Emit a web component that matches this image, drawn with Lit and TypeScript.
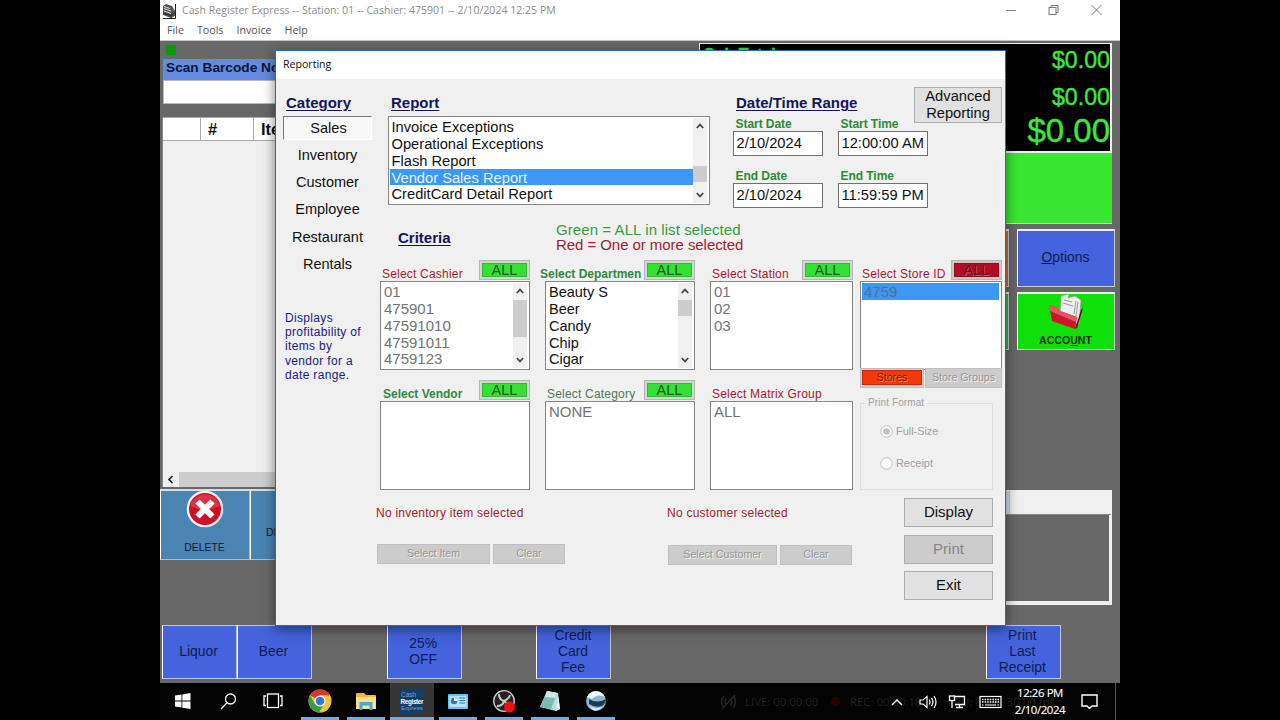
import { LitElement, html, css, svg, nothing } from "lit";
import { customElement, property } from "lit/decorators.js";
import { classMap } from "lit/directives/class-map.js";

const base = css`
  * { box-sizing: border-box; }
  :host { font-family: "Liberation Sans", Arial, sans-serif; color: #111; }
  svg { display: block; flex: none; }
`;

@customElement("list-box")
class ListBox extends LitElement {
  @property({ attribute: false }) items: string[] = [];
  @property({ type: Number }) selected = -1;
  @property({ type: Boolean }) dim = false;
  @property({ type: Boolean }) wide = false;
  @property({ attribute: false }) thumb: [number, number] | null = null;
  static styles = [base, css`
    :host { display: block; height: 89px; }
    .box { height: 100%; display: flex; background: #fff; border: 1px solid #868686; padding: 1px 2px 0 1px; }
    .rows { flex: 1; overflow: hidden; white-space: nowrap; }
    .row { height: 16.850px; line-height: 18px; font-size: 14.5px; padding-left: 2px; }
    .dim .row { color: #737373; font-size: 15px; }
    .row.sel { background: #3c98f4; color: #e4f3ff; }
    .dim .row.sel { color: #4f7396; }
    .wide .row { font-size: 14.7px; padding-left: 1.500px; }
    .bar { width: 14px; margin-bottom: 1px; background: #f0f0f0; display: flex; flex-direction: column; justify-content: space-between; position: relative; }
    .bar svg { margin: 5px auto; }
    .thumb { position: absolute; left: 0; width: 14px; background: #cdcdcd; }
  `];
  render() {
    const arrow = (d: string) => html`<svg width="8" height="6" viewBox="0 0 8 6"><path d=${d} fill="none" stroke="#444" stroke-width="1.7"/></svg>`;
    return html`<div class=${classMap({ box: true, dim: this.dim, wide: this.wide })}>
      <div class="rows">${this.items.map((t, i) => html`<div class=${classMap({ row: true, sel: i === this.selected })}>${t}</div>`)}</div>
      ${this.thumb ? html`<div class="bar">${arrow("M.8 5 4 1.6 7.2 5")}
        <div class="thumb" style="top:${this.thumb[0]}px;height:${this.thumb[1]}px"></div>
        ${arrow("M.8 1 4 4.4 7.2 1")}</div>` : nothing}
    </div>`;
  }
}

interface Crit { label: string; cls: string; items: string[]; dim?: boolean; thumb?: [number, number]; all?: string; selected?: number; }

@customElement("report-dialog")
class ReportDialog extends LitElement {
  static styles = [base, css`
    :host { display: flex; flex-direction: column; background: #f0f0f0; border: 1px solid #2b6ca8; box-shadow: 0 3px 12px rgba(0,0,0,.5); }
    .title { height: 28px; background: #fff; padding-left: 7px; font: 10.6px/27px "Open Sans", sans-serif; color: #111; }
    .body { flex: 1; display: flex; min-height: 0; }
    .head { font-weight: bold; font-size: 15px; line-height: 18px; text-decoration: underline; text-underline-offset: 2px; color: #14145f; white-space: nowrap; }
    .side { width: 100px; flex: none; padding-top: 15px; }
    .side .head { padding-left: 10px; }
    .cat { width: 89px; margin-left: 7px; height: 27.2px; line-height: 27.2px; text-align: center; font-size: 14.5px; }
    .cat.on { height: 24px; line-height: 23px; margin-top: 4px; margin-bottom: 2px; padding-left: 2px; background: #f8f8f8; border: 1px solid #777; border-right-color: #fff; border-bottom-color: #fff; }
    .desc { margin: 33px 0 0 9px; font-size: 12px; line-height: 14.2px; letter-spacing: .33px; color: #1c1c80; white-space: pre; }
    .main { flex: 1; min-width: 0; }
    .top { height: 136px; display: flex; padding-left: 12px; }
    .report { width: 322px; flex: none; padding-top: 15px; }
    .report .head { padding-left: 3px; }
    .report list-box { margin-top: 4px; }
    .dates { width: 196px; flex: none; margin-left: 23px; padding-top: 15px; }
    .dates .head { padding-left: 3px; }
    .grid { display: grid; grid-template-columns: 90px 90px; column-gap: 15px; row-gap: 13px; margin-top: 5px; }
    .lab { font-weight: bold; font-size: 12px; line-height: 14px; height: 14px; padding-left: 2.500px; color: #2d8a35; letter-spacing: -.05px; }
    .field { height: 25px; border: 1px solid #707070; background: #fff; font-size: 14.7px; line-height: 23px; padding-left: 2.500px; white-space: nowrap; }
    .btn { display: flex; align-items: center; justify-content: center; text-align: center; background: #e1e1e1; border: 1px solid #adadad; font-size: 15px; flex: none; white-space: nowrap; }
    .adv { width: 88px; height: 36px; margin: 8px 0 0 -15px; font-size: 14.7px; line-height: 17px; }
    .mid { height: 45px; display: flex; padding-left: 22px; }
    .mid .head { width: 158px; padding-top: 14px; }
    .key { padding-top: 7px; font-size: 15px; line-height: 15px; color: #3b9a40; letter-spacing: .08px; }
    .key .red { letter-spacing: -.06px; }
    .red { color: #a01c30; }
    .crits { display: grid; grid-template-columns: 150px 150px 143px 134px; column-gap: 15px; padding-left: 4px; }
    .last { margin-left: -8px; }
    .ch { height: 21px; display: flex; justify-content: space-between; }
    .cl { flex: 1; min-width: 0; overflow: hidden; white-space: nowrap; font-size: 12px; letter-spacing: .2px; line-height: 14px; padding: 7px 0 0 2px; }
    .cl.bold { font-weight: bold; color: #338743; letter-spacing: 0; padding-left: 3px; }
    .cl.bold.shift { margin-left: -5px; margin-right: 3px; padding-left: 0; font-size: 12px; }
    .cl.olive { color: #53775a; }
    .all { width: 51px; height: 20px; border: 1px solid #b5b5b5; background: #c9ddc9; padding: 2px; }
    .all i { display: block; height: 100%; font-style: normal; background: #35e035; color: #205a20; font-size: 14.5px; text-align: center; border: 1px solid #31bb36; line-height: 13px; }
    .all.r { background: #d4c5c5; }
    .all.r i { background: #b30d27; border-color: #8c1025; color: #69101c; text-shadow: 1px 1px #d05365; }
    .second { margin-top: 10px; }
    .stores { height: 20px; display: flex; margin-top: -2px; position: relative; }
    .st { width: 64px; background: #d4cdcb; border: 1px solid #c4bcba; padding: 1px 1px 2px; font-size: 10.7px; text-align: center; color: #7b1c08; text-shadow: 1px 1px #f88050; }
    .st i { display: block; height: 100%; font-style: normal; background: #f03a0a; border: 1px solid #c82b08; line-height: 13px; }
    .off { background: #cccccc; border: 1px solid #bfbfbf; color: #969696; text-shadow: 1px 1px #f2f2f2; font-size: 10.6px; padding-bottom: 2px; }
    .grp { flex: 1; margin-left: 1px; }
    .fmt { display: flow-root; height: 87px; width: 133px; margin-top: 15px; border: 1px solid #dedede; border-top: 0; color: #a0a0a0; font-size: 10.9px; }
    .fmt .leg { display: flex; align-items: center; font-size: 10px; line-height: 12px; margin-top: -6px; gap: 3px; height: 12px; letter-spacing: .1px; }
    .fmt .leg::before { content: ""; width: 4px; height: 1px; background: #dedede; }
    .fmt .leg::after { content: ""; flex: 1; height: 1px; background: #dedede; }
    .opt { display: flex; align-items: center; gap: 3px; height: 32px; padding-left: 19px; }
    .leg + .opt { margin-top: 6px; }
    .foot { display: flex; height: 134px; }
    .msg { font-size: 12px; letter-spacing: .24px; line-height: 14px; color: #a01c30; padding-top: 16px; height: 54px; white-space: nowrap; }
    .g1 { width: 291px; flex: none; }
    .g2 { width: 238px; flex: none; }
    .pair { display: flex; gap: 3px; }
    .g1 .pair { padding-left: 1px; }
    .g2 .pair { padding: 1px 0 0 1px; }
    .pair .btn { height: 20px; }
    .w113 { width: 113px; } .w72 { width: 72px; } .w109 { width: 109px; }
    .acts { width: 89px; flex: none; display: flex; flex-direction: column; gap: 7.500px; padding-top: 8px; margin-left: -1px; }
    .acts .btn { height: 29px; font-size: 15px; padding-bottom: 2px; }
    .acts .gray { background: #ccc; color: #858585; }
  `];
  crit(c: Crit, last = false) {
    return html`<div class=${last ? "last" : ""}>
      <div class="ch"><div class="cl ${c.cls}">${c.label}</div>
      ${c.all ? html`<div class="all ${c.all}"><i>ALL</i></div>` : nothing}</div>
      <list-box .items=${c.items} ?dim=${c.dim} .thumb=${c.thumb ?? null} .selected=${c.selected ?? -1}></list-box></div>`;
  }
  render() {
    const radio = (on: boolean) => html`<svg width="13" height="13" viewBox="0 0 13 13"><circle cx="6.5" cy="6.5" r="5.7" fill="#fdfdfd" stroke="#bdbdbd"/>${on ? svg`<circle cx="6.5" cy="6.5" r="3.3" fill="#c2c2c2"/>` : nothing}</svg>`;
    return html`
      <div class="title">Reporting</div>
      <div class="body">
        <div class="side">
          <div class="head">Category</div>
          <div class="cat on">Sales</div>
          ${["Inventory", "Customer", "Employee", "Restaurant", "Rentals"].map((t) => html`<div class="cat">${t}</div>`)}
          <div class="desc">${["Displays", "profitability of", "items by", "vendor for a", "date range."].join("\n")}</div>
        </div>
        <div class="main">
          <div class="top">
            <div class="report"><div class="head">Report</div>
              <list-box wide .items=${["Invoice Exceptions", "Operational Exceptions", "Flash Report", "Vendor Sales Report", "CreditCard Detail Report"]} .selected=${3} .thumb=${[48, 16]}></list-box></div>
            <div class="dates"><div class="head">Date/Time Range</div>
              <div class="grid">
                <div><div class="lab">Start Date</div><div class="field">2/10/2024</div></div>
                <div><div class="lab">Start Time</div><div class="field">12:00:00 AM</div></div>
                <div><div class="lab">End Date</div><div class="field">2/10/2024</div></div>
                <div><div class="lab">End Time</div><div class="field">11:59:59 PM</div></div>
              </div></div>
            <div class="btn adv">Advanced<br>Reporting</div>
          </div>
          <div class="mid"><div class="head">Criteria</div>
            <div class="key">Green = ALL in list selected<div class="red">Red = One or more selected</div></div></div>
          <div class="crits">
            ${this.crit({ label: "Select Cashier", cls: "red", items: ["01", "475901", "47591010", "47591011", "4759123"], dim: true, thumb: [17, 37], all: "g" })}
            ${this.crit({ label: "Select Departmen", cls: "bold shift", items: ["Beauty S", "Beer", "Candy", "Chip", "Cigar"], thumb: [17, 16], all: "g" })}
            ${this.crit({ label: "Select Station", cls: "red", items: ["01", "02", "03"], dim: true, all: "g" })}
            ${this.crit({ label: "Select Store ID", cls: "red", items: ["4759"], dim: true, selected: 0, all: "r" }, true)}
            <div class="second">${this.crit({ label: "Select Vendor", cls: "bold", items: [], all: "g" })}</div>
            <div class="second">${this.crit({ label: "Select Category", cls: "olive", items: ["NONE"], dim: true, all: "g" })}</div>
            <div class="second">${this.crit({ label: "Select Matrix Group", cls: "red", items: ["ALL"], dim: true })}</div>
            <div class="last">
              <div class="stores"><div class="st"><i>Stores</i></div><div class="btn off grp">Store Groups</div></div>
              <div class="fmt"><div class="leg">Print Format</div>
                <div class="opt">${radio(true)}Full-Size</div><div class="opt">${radio(false)}Receipt</div></div>
            </div>
          </div>
          <div class="foot">
            <div class="g1"><div class="msg">No inventory item selected</div>
              <div class="pair"><div class="btn off w113">Select Item</div><div class="btn off w72">Clear</div></div></div>
            <div class="g2"><div class="msg">No customer selected</div>
              <div class="pair"><div class="btn off w109">Select Customer</div><div class="btn off w72">Clear</div></div></div>
            <div class="acts"><div class="btn">Display</div><div class="btn gray">Print</div><div class="btn">Exit</div></div>
          </div>
        </div>
      </div>`;
  }
}

@customElement("task-bar")
class TaskBar extends LitElement {
  static styles = [base, css`
    :host { display: flex; position: relative; height: 37px; background: #030303; color: #fff; font-family: "Open Sans", sans-serif; }
    .slot { width: 46px; display: flex; align-items: center; justify-content: center; border-bottom: 3px solid transparent; padding-top: 2px; }
    .s1 { width: 45px; } .s3 { width: 43px; margin-right: 3px; }
    .slot.run { width: 38px; margin: 0 4px; border-bottom-color: #76a9d8; }
    .slot.active { width: 44px; margin: 0 1px; background: #353535; }
    .tray { margin-left: auto; display: flex; align-items: center; position: relative; }
    .clock { width: 58px; margin: 0 0 2px 9px; text-align: center; font-size: 11.4px; line-height: 17px; letter-spacing: -.4px; white-space: nowrap; -webkit-text-stroke: .15px #fff; }
    .ghost { position: absolute; left: 560px; top: 0; height: 37px; display: flex; align-items: center; color: #212121; font-size: 11.400px; white-space: nowrap; }
    .ghost .live { margin-left: 8px; width: 86px; }
    .ghost .dot { width: 9px; height: 9px; border-radius: 5px; background: #2a0206; margin-right: 10px; }
    .ghost .rec { width: 97px; }
    .edge { width: 1px; height: 37px; background: #555; margin: 0 4px 0 16px; }
  `];
  render() {
    return html`
      <div class="ghost">
        <svg width="17" height="16" viewBox="0 0 17 16" fill="none" stroke="#252525" stroke-width="1.5"><path d="M4 2Q-1 8 4 14M6.5 4.5Q4 8 6.5 11.5M13 2Q18 8 13 14M10.500 4.500Q13 8 10.500 11.500M15 1 2 15"/></svg>
        <span class="live">LIVE: 00:00:00</span><span class="dot"></span><span class="rec">REC: 00:00:18</span><span>CPU: 8.4%, 30.00 fps</span>
      </div>
      <div class="slot s1"><svg width="16" height="16" viewBox="0 0 16 16" fill="#fff"><path d="M0 2.400 6.500 1.500V7.600H0zM7.300 1.400 15.500 0V7.600H7.300zM0 8.400H6.500V14.500L0 13.600zM7.300 8.400H15.500V16L7.300 14.700z"/></svg></div>
      <div class="slot"><svg width="17" height="17" viewBox="0 0 17 17" fill="none" stroke="#fff" stroke-width="1.300"><circle cx="10.500" cy="6" r="5"/><path d="M7 9.700 1 16"/></svg></div>
      <div class="slot s3"><svg width="20" height="16" viewBox="0 0 20 16" fill="none" stroke="#fff" stroke-width="1.300"><rect x="4.500" y="1" width="11" height="13.500"/><path d="M3 3H1v9.500H3M17 3h2v9.500H17"/></svg></div>
      <div class="slot run"><svg width="24" height="24" viewBox="0 0 24 24"><circle cx="12" cy="12" r="11.500" fill="#f3c52c"/><path d="M12 12 2 6.300A11.500 11.500 0 0 1 22 6.300H12z" fill="#d8382c"/><path d="M12 12 7 15 2 6.300A11.500 11.500 0 0 0 11 23.500L16.500 14.500z" fill="#3c9b45"/><circle cx="12" cy="12" r="5.600" fill="#fff"/><circle cx="12" cy="12" r="4.300" fill="#2f7ad8"/></svg></div>
      <div class="slot run"><svg width="21" height="19" viewBox="0 0 21 19"><path d="M0 2Q0 1 1 1H8L10 3H19Q20 3 20 4V17H0z" fill="#e5b94a"/><path d="M0 5H20V17H0z" fill="#fae08c"/><path d="M3.500 18V10H16.500V18H13.500V13.500H6.500V18z" fill="#44a9d8"/></svg></div>
      <div class="slot run active"><svg width="24" height="24" viewBox="0 0 24 24"><rect width="24" height="24" fill="#123f69"/><g font-family="Liberation Sans" fill="#7fa5c5" font-size="6.500"><text x="1" y="7.500">Cash</text><text x="0.500" y="14.500" fill="#fff" font-weight="bold" font-size="6.300" textLength="23">Register</text><text x="1" y="20.500" font-size="6">Express</text></g></svg></div>
      <div class="slot run"><svg width="20" height="15" viewBox="0 0 20 15"><rect width="20" height="15" rx="1" fill="#68c4f0"/><rect x="1.500" y="2" width="17" height="11" fill="#b3e5fa"/><circle cx="6" cy="7" r="3.200" fill="#2c78b7"/><path d="M6 7V3.800A3.200 3.200 0 0 1 9.200 7z" fill="#fff"/><path d="M11.500 4H17M11.500 6.500H17M11.500 9H17" stroke="#267ab5" stroke-width="1.200"/></svg></div>
      <div class="slot run"><svg width="24" height="24" viewBox="0 0 24 24"><circle cx="12" cy="12" r="10.300" fill="#222" stroke="#d0d0d0" stroke-width="1.300"/><g fill="none" stroke="#c9c9c9" stroke-width="2"><path d="M7 5Q7 11 12 12Q17 10 18 6M12 12Q11 17 5 17M12 12Q17 15 15 20"/></g><circle cx="17.500" cy="18" r="5.500" fill="#f50c0c"/></svg></div>
      <div class="slot run"><svg width="23" height="22" viewBox="0 0 23 22"><path d="M8 1 19 3 21 19 17 21 1 17z" fill="#b9ddda"/><path d="M8 1 18 3 12 19 1 17z" fill="#79b9b6"/><path d="M8 1 18 3 16 8 6 7z" fill="#cce9e5"/><path d="M17 21 21 19 19 5z" fill="#edf7f5"/></svg></div>
      <div class="slot run"><svg width="22" height="22" viewBox="0 0 22 22"><circle cx="11" cy="11" r="10" fill="#8db6cc"/><path d="M2 7A10 10 0 0 1 20 7Q13 3 7 9z" fill="#edf6fa"/><path d="M4 9Q12 14 21 9 21 13 17 16 10 18 4 14z" fill="#173b5b"/><path d="M3 15Q9 20 17 17 13 22 8 20z" fill="#dfe9ee"/></svg></div>
      <div class="tray">
        <svg width="12" height="8" viewBox="0 0 12 8" fill="none" stroke="#fff" stroke-width="1.500"><path d="M1 7 6 2 11 7"/></svg>
        <svg width="35" height="16" viewBox="0 0 35 16" fill="none" stroke="#fff" stroke-width="1.200"><path d="M17 6h3l4-3.500v11L20 10H17zM26 5.500Q28 8 26 10.500M28.500 3.800Q31.500 8 28.500 12.200M31 2Q35 8 31 14"/></svg>
        <svg width="34" height="16" viewBox="4 0 34 16" fill="none" stroke="#fff" stroke-width="1.300"><path d="M19.500 2.500H30.500V10.500H21M22 13.500H29M25.500 10.500V13.500"/><rect x="15.500" y="2" width="5" height="4.500" fill="#030303"/><path d="M18 6.500V14"/></svg>
        <svg width="30" height="14" viewBox="0 0 30 14" fill="none" stroke="#fff" stroke-width="1.200"><rect x="8" y="1.500" width="21" height="11"/><path d="M10 4.500H27M10 7H27" stroke-dasharray="1.500 1.100" stroke-width="1.500"/><path d="M10 10h1.500M13 10H24M25.500 10H27"/></svg>
        <div class="clock">12:26 PM<br>2/10/2024</div>
        <svg width="30" height="17" viewBox="0 0 30 17" fill="none" stroke="#fff" stroke-width="1.400"><path d="M13 2H28V13H23L20.500 15.500 18 13H13z"/></svg>
        <div class="edge"></div>
      </div>`;
  }
}

@customElement("app-root")
class AppRoot extends LitElement {
  static styles = [base, css`
    :host { display: block; width: 1280px; height: 720px; background: #000; padding: 0 160px; overflow: hidden; box-sizing: border-box; }
    .screen { position: relative; width: 960px; height: 720px; display: flex; flex-direction: column; background: #686868; }
    .title { height: 21px; background: #fff; display: flex; align-items: center; padding: 0 18px 0 2px; font: 10.570px/21px "Open Sans", sans-serif; color: #8c8c8c; }
    .title span { padding-left: 6px; white-space: pre; }
    .ctl { margin-left: auto; display: flex; gap: 32px; align-items: center; margin-bottom: 2px; }
    .menu { height: 20px; background: #fff; border-bottom: 1px solid #c8c8c8; display: flex; gap: 13px; padding-left: 7px; font: 10.700px/19px "Open Sans", sans-serif; color: #555; }
    .work { height: 448px; display: flex; justify-content: space-between; padding: 2px 6px 0 2px; }
    .left { width: 240px; padding-top: 2px; }
    .led { width: 10px; height: 10px; background: #0c970c; margin-left: 4px; }
    .scan { height: 21px; margin: 4px 0 0 1px; background: #648be0; padding-left: 3px; font: bold 13.700px/17px "Liberation Sans"; color: #0b1538; white-space: nowrap; }
    .entry { height: 24px; margin-left: 1px; background: #fff; border: 1px solid #bbb; }
    .tbl { margin-top: 13px; height: 370px; background: #f0f0f0; display: flex; flex-direction: column; border-left: 1px solid #888; }
    .th { height: 24px; display: flex; background: #fff; border: 1px solid #aaa; border-left: 0; font: bold 16.400px/23px "Liberation Sans"; }
    .th div { border-right: 1px solid #aaa; padding-left: 7px; }
    .c1 { width: 38px; } .c2 { width: 53px; }
    .hs { margin-top: auto; height: 15px; display: flex; background: #cdcdcd; }
    .hs div { width: 16px; background: #f0f0f0; padding: 3px 4px; }
    .right { width: 415px; padding-right: 2px; }
    .tot { height: 110px; background: #000; border: 1px solid #ccc; border-width: 1px 2px 2px 1px; border-color: #eee; color: #3de83d; display: grid; grid-template-columns: 1fr auto; align-content: start; font-size: 23.200px; -webkit-text-stroke: .4px #3de83d; }
    .amts { text-align: right; }
    .amts .big { font-size: 33px; line-height: 28px; }
    .amts .a1 { line-height: 33px; } .amts .a2 { line-height: 40px; }
    .sub { font-weight: bold; font-size: 16px; padding: 0 0 0 4px; line-height: 22px; }
    .pay { height: 71px; background: #3be632; border-bottom: 1px solid #bdf0b8; }
    .acts { display: grid; grid-template-columns: 97px 98px; gap: 5px 8px; justify-content: end; margin: 5px -3px 0 0; }
    .tile { height: 58px; border: 1px solid #ccc; border-left-color: #fff; border-top: 2px solid #eee; display: flex; flex-direction: column; align-items: center; justify-content: center; text-align: center; font-size: 13.900px; color: #0f1c50; background: #4463dc; padding: 0 1px 3px 0; }
    .orange { background: #c4694c; } .teal { background: #2eb557; }
    .acct { background: #10e009; font-size: 10.600px; font-weight: bold; color: #062c06; justify-content: flex-start; }
    .acct span { margin-top: 2px; }
    .lower { height: 136px; display: flex; justify-content: space-between; padding: 0 8px 0 0; }
    .tools { display: flex; }
    .tool { width: 90px; height: 71px; background: #4a84b3; border: 1px solid #bbb; border-left-color: #fff; border-top: 2px solid #ddd; font-size: 10.400px; color: #101c33; display: flex; flex-direction: column; align-items: center; }
    .tool.one { padding-right: 1px; }
    .tool.one svg { margin-top: -1px; }
    .tool.one span { margin-top: 14px; }
    .tool.two { padding: 36px 0 0 15px; align-items: flex-start; }
    .tabs { width: 240px; height: 115px; margin-top: 1px; background: #686868; border: 2px solid #f0f0f0; border-width: 1px 3px 4px; }
    .tabs div { height: 24px; background: #f0f0f0; border-bottom: 1px solid #888; margin-right: -2px; display: flex; }
    .tabs i { width: 135px; background: #cfe3ea; border-right: 1px solid #b5d3de; }
    .quick { height: 58px; padding: 0 0 0 2px; display: grid; grid-template-columns: repeat(12, 74.900px); }
    .q { height: 54px; width: 75px; padding: 0 2px 2px 0; font-size: 13.900px; line-height: 16.200px; border: 1px solid #bbc5ea; border-left-color: #fff; background: #4463dc; color: #0f1c50; display: flex; align-items: center; justify-content: center; text-align: center; white-space: pre-line; }
    report-dialog { position: absolute; left: 115px; top: 50px; width: 731px; height: 576px; }
  `];
  render() {
    const quick = ["Liquor", "Beer", "", "25%\nOFF", "", "Credit\nCard\nFee", "", "", "", "", "", "Print\nLast\nReceipt"];
    return html`<div class="screen">
      <div class="title">
        <svg width="14" height="16" viewBox="0 0 14 16"><path d="M1 3 4 1 10 3 13 8V13L9 15 1 12z" fill="#555"/><path d="M2 3.500 8 5.500M2 5.500 9 8M2 8 9 10.500" stroke="#ddd"/><path d="M1 10 9 12.500 13 10M9 15V12.500M1 15.500H13.500V1" stroke="#222" fill="none"/></svg>
        <span>Cash Register Express -- Station: 01 -- Cashier: 475901 -- 2/10/2024 12:25 PM</span>
        <div class="ctl">
          <svg width="10" height="10" viewBox="0 0 10 10"><path d="M0 5.500H10" stroke="#888"/></svg>
          <svg width="11" height="10" viewBox="0 0 11 10" fill="none" stroke="#777"><rect x="1" y="2.500" width="7" height="7"/><path d="M3 2.500V.5H10V7.500H8"/></svg>
          <svg width="11" height="10" viewBox="0 0 11 10"><path d="M.5 0 10.500 10M10.500 0 .5 10" stroke="#777"/></svg>
        </div>
      </div>
      <div class="menu"><span>File</span><span>Tools</span><span>Invoice</span><span>Help</span></div>
      <div class="work">
        <div class="left">
          <div class="led"></div><div class="scan">Scan Barcode Now</div><div class="entry"></div>
          <div class="tbl"><div class="th"><div class="c1"></div><div class="c2">#</div><div>Item</div></div>
            <div class="hs"><div><svg width="7" height="9" viewBox="0 0 7 9"><path d="M5.500 1 2 4.500 5.500 8" fill="none" stroke="#222" stroke-width="1.700"/></svg></div></div></div>
        </div>
        <div class="right">
          <div class="tot"><div class="sub">Sub Total:</div><div class="amts"><div class="a1">$0.00</div><div class="a2">$0.00</div><div class="big">$0.00</div></div></div>
          <div class="pay"></div>
          <div class="acts"><div class="tile orange"></div><div class="tile"><span><u>O</u>ptions</span></div>
            <div class="tile teal"></div><div class="tile acct">
              <svg width="36" height="38" viewBox="0 0 36 38"><path d="M13 2 21 0 20 4 27 2 33 6 31 30 12 25z" fill="#eee" stroke="#999" stroke-width=".6"/><path d="M16 6 24 8M15 9 25 12M28 7 26 20M30 8 28 22" stroke="#999"/><path d="M33 16 27 35 29 34 35 14z" fill="#650712"/><path d="M1 11 8 13 12 17 29 23 27 35 4 27z" fill="#cf1628"/><path d="M1 11 8 13 12 17 29 23 28 28 2 17z" fill="#e65460"/></svg>
              <span>ACCO<u>U</u>NT</span></div></div>
        </div>
      </div>
      <div class="lower">
        <div class="tools"><div class="tool one">
          <svg width="38" height="38" viewBox="0 0 38 38"><circle cx="19" cy="19" r="18.300" fill="#f6eeee"/><circle cx="19" cy="19" r="16" fill="#cf1026"/><path d="M4 16A15.500 15.500 0 0 1 34 16Q19 23 4 16z" fill="#df4350" opacity=".7"/><path d="M11.500 11.500 26.500 26.500M26.500 11.500 11.500 26.500" stroke="#fff" stroke-width="6"/></svg>
          <span>DELETE</span></div><div class="tool two">DISCOUNT</div></div>
        <div class="tabs"><div><i></i></div></div>
      </div>
      <div class="quick">${quick.map((t) => t ? html`<div class="q">${t}</div>` : html`<div></div>`)}</div>
      <task-bar></task-bar>
      <report-dialog></report-dialog>
    </div>`;
  }
}
